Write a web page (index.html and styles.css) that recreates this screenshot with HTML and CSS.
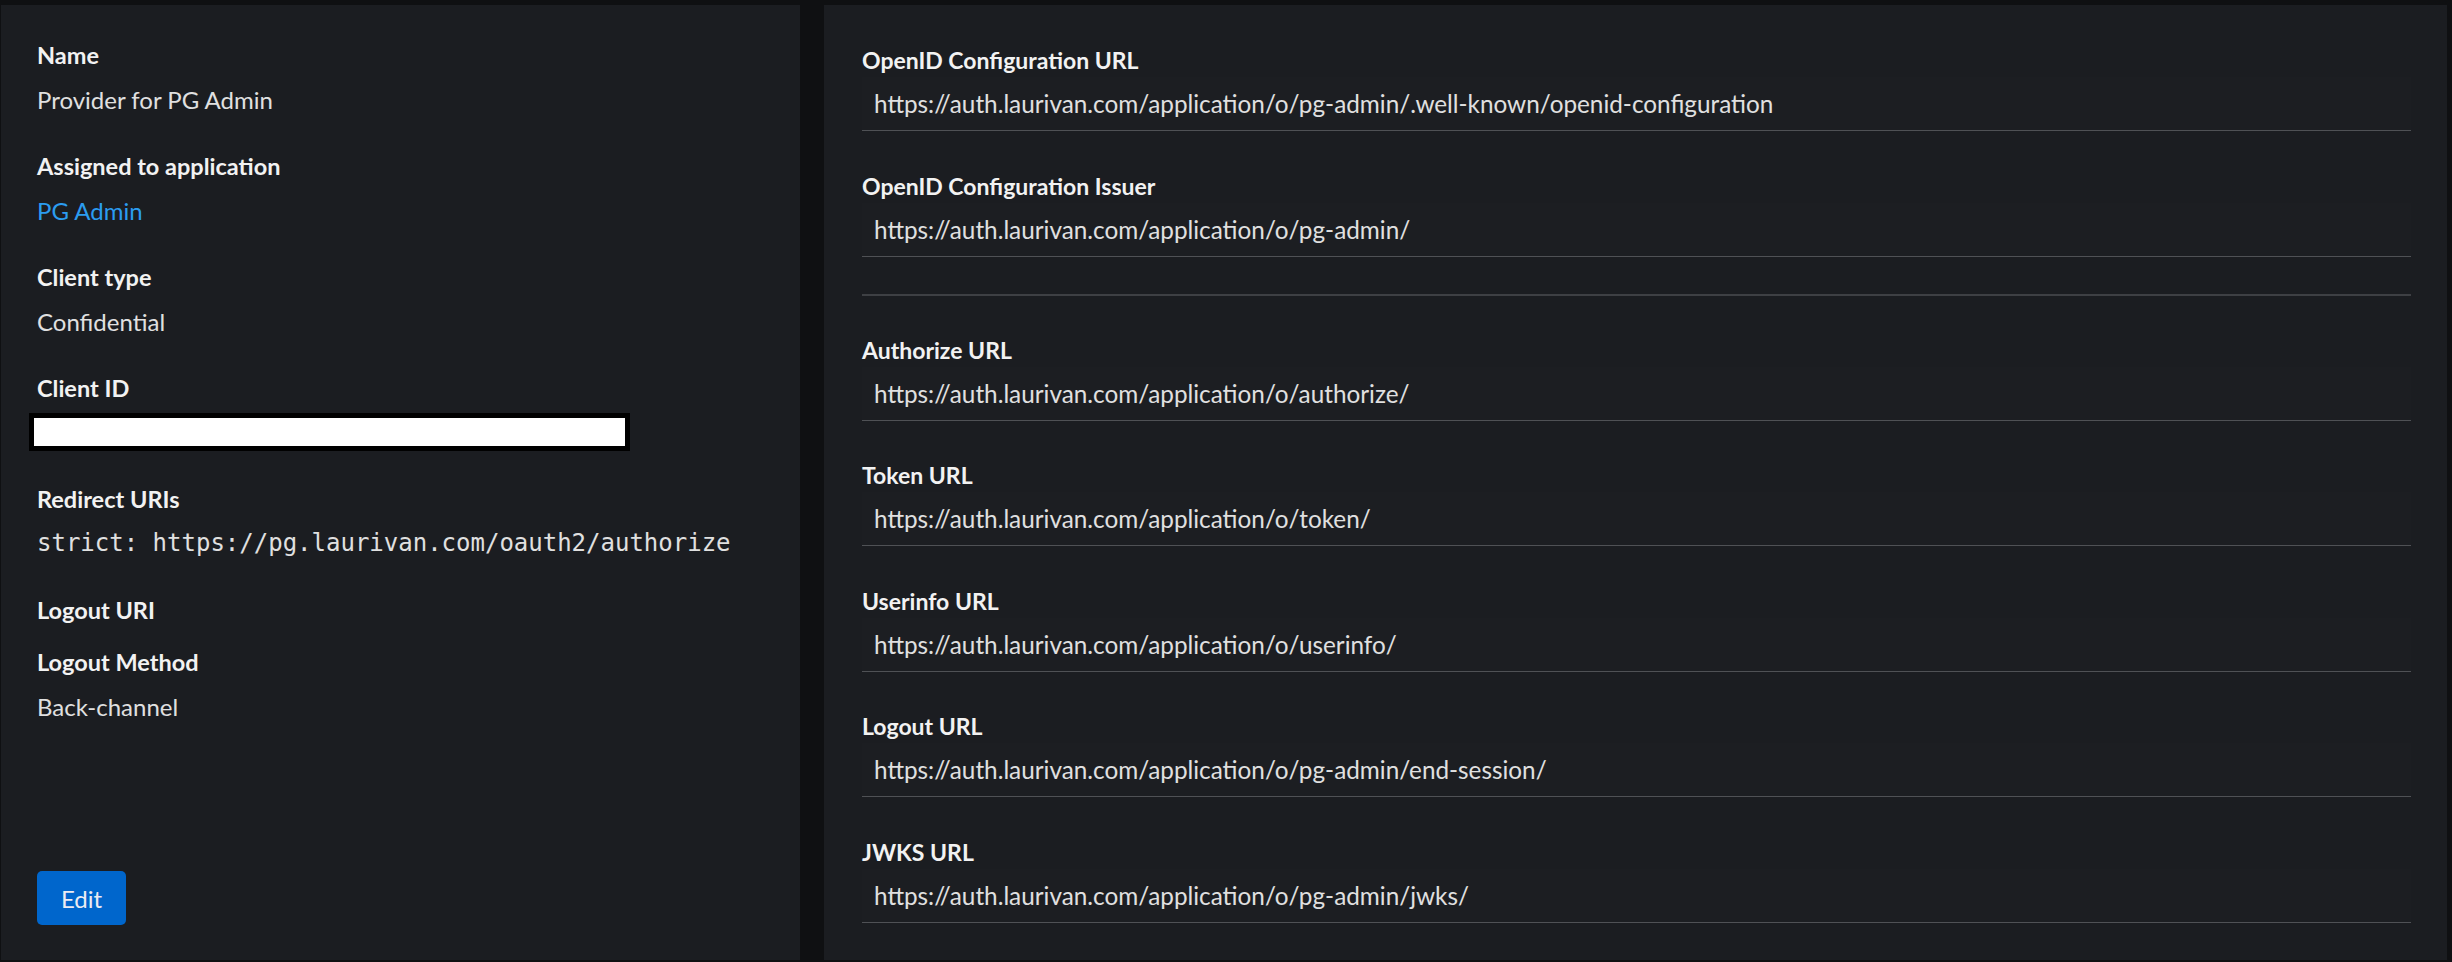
FILE: index.html
```html
<!DOCTYPE html>
<html lang="en">
  <head>
    <meta charset="UTF-8" />
    <meta name="viewport" content="width=device-width, initial-scale=1.0" />
    <title>Provider for PG Admin</title>
    <link rel="stylesheet" href="styles.css">
  </head>
  <body>
    <main class="layout">
      <section class="card card-details">
        <dl class="details">
          <div class="details-group">
            <dt>Name</dt>
            <dd>Provider for PG Admin</dd>
          </div>
          <div class="details-group">
            <dt>Assigned to application</dt>
            <dd><a href="#">PG Admin</a></dd>
          </div>
          <div class="details-group">
            <dt>Client type</dt>
            <dd>Confidential</dd>
          </div>
          <div class="details-group">
            <dt>Client ID</dt>
            <dd><span class="redacted"></span></dd>
          </div>
          <div class="details-group">
            <dt>Redirect URIs</dt>
            <dd><code>strict: https://pg.laurivan.com/oauth2/authorize</code></dd>
          </div>
          <div class="details-group">
            <dt>Logout URI</dt>
          </div>
          <div class="details-group">
            <dt>Logout Method</dt>
            <dd>Back-channel</dd>
          </div>
        </dl>
        <div class="card-footer">
          <button class="btn-primary">Edit</button>
        </div>
      </section>

      <section class="card card-urls">
        <form class="url-form">
          <div class="field">
            <label for="openid-url">OpenID Configuration URL</label>
            <input id="openid-url" readonly value="https://auth.laurivan.com/application/o/pg-admin/.well-known/openid-configuration" />
          </div>
          <div class="field">
            <label for="openid-issuer">OpenID Configuration Issuer</label>
            <input id="openid-issuer" readonly value="https://auth.laurivan.com/application/o/pg-admin/" />
          </div>
          <hr class="separator" />
          <div class="field">
            <label for="authorize-url">Authorize URL</label>
            <input id="authorize-url" readonly value="https://auth.laurivan.com/application/o/authorize/" />
          </div>
          <div class="field">
            <label for="token-url">Token URL</label>
            <input id="token-url" readonly value="https://auth.laurivan.com/application/o/token/" />
          </div>
          <div class="field">
            <label for="userinfo-url">Userinfo URL</label>
            <input id="userinfo-url" readonly value="https://auth.laurivan.com/application/o/userinfo/" />
          </div>
          <div class="field">
            <label for="logout-url">Logout URL</label>
            <input id="logout-url" readonly value="https://auth.laurivan.com/application/o/pg-admin/end-session/" />
          </div>
          <div class="field">
            <label for="jwks-url">JWKS URL</label>
            <input id="jwks-url" readonly value="https://auth.laurivan.com/application/o/pg-admin/jwks/" />
          </div>
        </form>
      </section>
    </main>
  </body>
</html>
```

FILE: styles.css
```css
* {
  box-sizing: border-box;
}
html,
body {
  height: 100vh;
  margin: 0;
  padding: 0;
}
body {
  font-family: Lato, "Liberation Sans", sans-serif;
  background: #0f1012;
  color: #e0e0e0;
}
.layout {
  display: grid;
  grid-template-columns: 799px 1fr;
  gap: 24px;
  height: 100%;
  padding: 5px 5px 2px 1px;
}
.card {
  background: #1b1d21;
}

/* left column */
.card-details {
  display: flex;
  flex-direction: column;
  padding: 38px 36px 35px;
}
.details {
  display: flex;
  flex-direction: column;
  gap: 28px;
  margin: 0;
}
.details dt {
  font-size: 23.5px;
  font-weight: 700;
  line-height: 24px;
  color: #f2f2f2;
}
.details dd {
  margin: 5px 0 0;
  height: 54px;
  display: flex;
  align-items: center;
  font-size: 24px;
  color: #e0e0e0;
}
.details a {
  color: #2b9cf0;
  text-decoration: none;
}
.details code {
  font-family: "DejaVu Sans Mono", "Liberation Mono", monospace;
  font-size: 24px;
  color: #e0e0e0;
}
.redacted {
  display: block;
  width: 601px;
  height: 38px;
  margin-left: -8px;
  background: #fff;
  border: 5px solid #000;
}
.card-footer {
  margin-top: auto;
}
.btn-primary {
  font-family: inherit;
  font-size: 24px;
  height: 54px;
  padding: 0 24px;
  border: 0;
  border-radius: 5px;
  background: #0066cc;
  color: #ebebf2;
  cursor: pointer;
}

/* right column */
.card-urls {
  padding: 43px 36px 0 38px;
}
.url-form {
  display: flex;
  flex-direction: column;
  gap: 42.5px;
}
.field label {
  display: block;
  font-size: 23px;
  font-weight: 700;
  line-height: 24px;
  margin-bottom: 5px;
  color: #f2f2f2;
}
.field input {
  display: block;
  width: 100%;
  height: 54px;
  padding: 0 12px;
  font-family: inherit;
  font-size: 24.3px;
  color: #e0e0e0;
  background: #1c1e22;
  border: 0;
  border-bottom: 1px solid #4f5155;
  outline: none;
}
.separator {
  margin: -5px 0 -1px;
  border: 0;
  height: 2px;
  background: #3e4044;
}
```
